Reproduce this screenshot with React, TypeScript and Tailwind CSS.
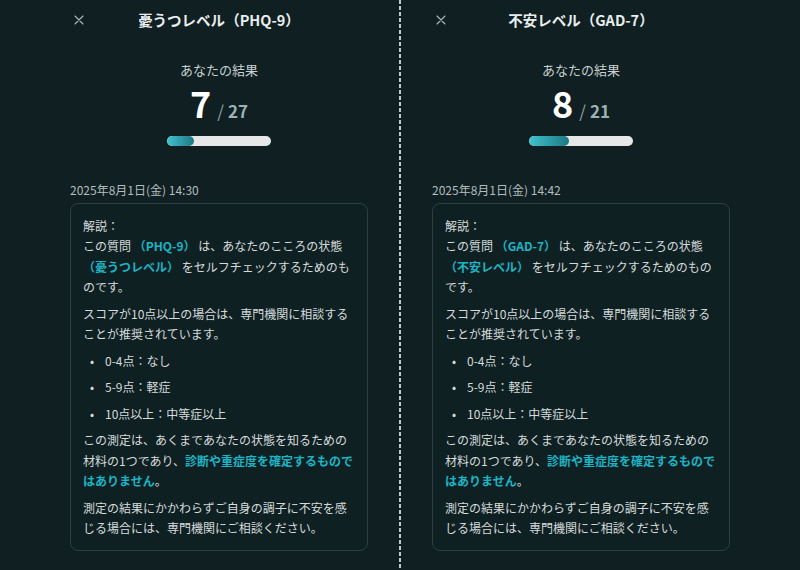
const font = { fontFamily: '"Noto Sans CJK JP", "Noto Sans", sans-serif' };

type Result = {
  title: string;
  code: string;
  label: string;
  score: number;
  max: number;
  date: string;
};

const results: Result[] = [
  { title: "憂うつレベル", code: "PHQ-9", label: "憂うつレベル", score: 7, max: 27, date: "2025年8月1日(金) 14:30" },
  { title: "不安レベル", code: "GAD-7", label: "不安レベル", score: 8, max: 21, date: "2025年8月1日(金) 14:42" },
];

const CloseIcon = () => (
  <svg width="10" height="10" viewBox="0 0 10 10" className="text-[#aeb8b9]">
    <path d="M1 1L9 9M9 1L1 9" stroke="currentColor" strokeWidth="1.1" strokeLinecap="round" />
  </svg>
);

const Panel = ({ r, className }: { r: Result; className: string }) => (
  <div className={className}>
    <div className="w-[298px] flex flex-col">
      <div className="grid grid-cols-[24px_1fr_24px] items-center h-[40px]">
        <div className="pl-[4px] flex items-center">
          <CloseIcon />
        </div>
        <h1 className="text-center text-[14.5px] font-bold text-[#e9eded]">
          {r.title}（{r.code}）
        </h1>
        <div />
      </div>

      <p className="mt-[20px] text-center text-[13px] leading-[20px] text-[#c9d1d1]">あなたの結果</p>

      <div className="mt-[4px] flex items-baseline justify-center">
        <span className="text-[36px] leading-none font-bold text-white">{r.score}</span>
        <span className="ml-[6px] text-[17px] text-[#8aa3a5]">/</span>
        <span className="ml-[4px] text-[17px] font-semibold text-[#9cb3b5]">{r.max}</span>
      </div>

      <div className="mt-[12px] mx-auto w-[104px] h-[10px] rounded-full bg-[#e6e7e7] overflow-hidden">
        <div
          className="h-full rounded-full bg-gradient-to-r from-[#41c3ce] to-[#1e7884]"
          style={{ width: `${(r.score / r.max) * 100}%` }}
        />
      </div>

      <p className="mt-[36px] text-[12px] leading-[16px] text-[#b3bdbe]">{r.date}</p>

      <div className="mt-[5px] rounded-[8px] border border-[#2d3f41] bg-[#0f2023] px-[12px] pt-[12px] pb-[11px] text-[12px] leading-[20.5px] text-[#d5dbdb] flex flex-col gap-[6px]">
        <p>
          解説：
          <br />
          この質問 <span className="font-semibold text-[#1db4c4]">（{r.code}）</span> は、あなたのこころの状態{" "}
          <span className="font-semibold text-[#1db4c4]">（{r.label}）</span> をセルフチェックするためのものです。
        </p>
        <p>スコアが10点以上の場合は、専門機関に相談することが推奨されています。</p>
        <ul className="flex flex-col gap-[6px] pl-[7px]">
          {["0-4点：なし", "5-9点：軽症", "10点以上：中等症以上"].map((t) => (
            <li key={t} className="flex">
              <span className="w-[15px]">•</span>
              <span>{t}</span>
            </li>
          ))}
        </ul>
        <p>
          この測定は、あくまであなたの状態を知るための材料の1つであり、
          <span className="font-bold text-[#1db4c4]">診断や重症度を確定するものではありません</span>。
        </p>
        <p>測定の結果にかかわらずご自身の調子に不安を感じる場合には、専門機関にご相談ください。</p>
      </div>
    </div>
  </div>
);

export default function App() {
  return (
    <div className="w-[800px] h-[570px] overflow-hidden bg-[#0f1f22] flex" style={font}>
      <Panel r={results[0]} className="w-[399px] shrink-0 pl-[70px]" />
      <div className="w-[2px] shrink-0 h-full bg-[repeating-linear-gradient(to_bottom,#c3c9c9_0_4px,transparent_4px_6px)]" />
      <Panel r={results[1]} className="flex-1 pl-[31px]" />
    </div>
  );
}
